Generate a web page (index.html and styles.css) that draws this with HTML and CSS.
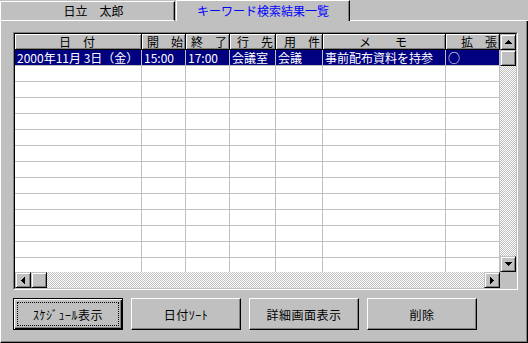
FILE: index.html
```html
<!DOCTYPE html>
<html lang="ja">
<head>
    <meta charset="UTF-8">
    <title>キーワード検索結果一覧</title>
    <link rel="stylesheet" href="styles.css">
</head>
<body>
    <div class="window">
        <!-- タブ -->
        <div class="tabs">
            <div class="tab">日立　太郎</div>
            <div class="tab active">キーワード検索結果一覧</div>
            <div class="tab-rest"></div>
        </div>

        <div class="panel">
            <!-- 検索結果一覧 -->
            <div class="grid">
                <div class="grid-inner">
                    <div class="sheet">
                        <div class="row head">
                            <span class="center">日　付</span>
                            <span>開　始</span>
                            <span>終　了</span>
                            <span>行　先</span>
                            <span>用　件</span>
                            <span class="center">メ　　モ</span>
                            <span>拡　張</span>
                        </div>
                        <div class="row sel">
                            <span>2000年11月 3日（金）</span>
                            <span>15:00</span>
                            <span>17:00</span>
                            <span>会議室</span>
                            <span>会議</span>
                            <span>事前配布資料を持参</span>
                            <span>○</span>
                        </div>
                        <div class="row"><span></span><span></span><span></span><span></span><span></span><span></span><span></span></div>
                        <div class="row"><span></span><span></span><span></span><span></span><span></span><span></span><span></span></div>
                        <div class="row"><span></span><span></span><span></span><span></span><span></span><span></span><span></span></div>
                        <div class="row"><span></span><span></span><span></span><span></span><span></span><span></span><span></span></div>
                        <div class="row"><span></span><span></span><span></span><span></span><span></span><span></span><span></span></div>
                        <div class="row"><span></span><span></span><span></span><span></span><span></span><span></span><span></span></div>
                        <div class="row"><span></span><span></span><span></span><span></span><span></span><span></span><span></span></div>
                        <div class="row"><span></span><span></span><span></span><span></span><span></span><span></span><span></span></div>
                        <div class="row"><span></span><span></span><span></span><span></span><span></span><span></span><span></span></div>
                        <div class="row"><span></span><span></span><span></span><span></span><span></span><span></span><span></span></div>
                        <div class="row"><span></span><span></span><span></span><span></span><span></span><span></span><span></span></div>
                        <div class="row"><span></span><span></span><span></span><span></span><span></span><span></span><span></span></div>
                        <div class="row"><span></span><span></span><span></span><span></span><span></span><span></span><span></span></div>
                    </div>

                    <div class="vscroll">
                        <div class="sbtn">
                            <svg width="7" height="4"><path d="M3 0h1v1h1v1h1v1h1v1H0V3h1V2h1V1h1z"/></svg>
                        </div>
                        <div class="sbtn"></div>
                        <div class="track"></div>
                        <div class="sbtn">
                            <svg width="7" height="4"><path d="M0 0h7v1H6v1H5v1H4v1H3V3H2V2H1V1H0z"/></svg>
                        </div>
                    </div>

                    <div class="hscroll">
                        <div class="sbtn">
                            <svg width="4" height="7"><path d="M3 0h1v7H3V6H2V5H1V4H0V3h1V2h1V1h1z"/></svg>
                        </div>
                        <div class="sbtn"></div>
                        <div class="track"></div>
                        <div class="sbtn">
                            <svg width="4" height="7"><path d="M0 0h1v1h1v1h1v1h1v1H3v1H2v1H1v1H0z"/></svg>
                        </div>
                    </div>

                    <div class="corner"></div>
                </div>
            </div>

            <!-- ボタン -->
            <div class="buttons">
                <button class="btn default"><span>ｽｹｼﾞｭｰﾙ表示</span></button>
                <button class="btn"><span>日付ｿｰﾄ</span></button>
                <button class="btn"><span>詳細画面表示</span></button>
                <button class="btn"><span>削除</span></button>
            </div>
        </div>
    </div>
</body>
</html>
```

FILE: styles.css
```css
* {
    box-sizing: border-box;
}
body {
    margin: 0;
    background: #c0c0c0;
    font-family: "Noto Sans CJK JP", sans-serif;
    font-size: 12px;
    color: #000;
}
.window {
    width: 528px;
    height: 343px;
    display: flex;
    flex-direction: column;
}

/* タブ */
.tabs {
    display: flex;
    height: 21px;
}
.tab {
    width: 175px;
    height: 20px;
    margin-top: 1px;
    padding-left: 12px;
    border-top: 1px solid #fff;
    border-left: 1px solid #fff;
    border-right: 1px solid #000;
    border-bottom: 1px solid #fff;
    box-shadow: inset -1px 0 #808080;
    display: flex;
    align-items: center;
    justify-content: center;
    line-height: 1;
}
.tab.active {
    width: 174px;
    height: 21px;
    margin-top: 0;
    margin-left: 1px;
    padding-left: 0;
    border-bottom: none;
    color: #0000ff;
}
.tab-rest {
    flex: 1;
    border-bottom: 1px solid #fff;
}

.panel {
    flex: 1;
    padding: 11px 9px 0 12px;
    border-left: 1px solid #fff;
    border-right: 1px solid #000;
    border-bottom: 1px solid #000;
    box-shadow: inset -1px -1px #808080;
}

/* 一覧 */
.grid {
    width: 505px;
    height: 258px;
    border: 1px solid;
    border-color: #808080 #fff #fff #808080;
}
.grid-inner {
    height: 100%;
    border: 1px solid;
    border-color: #000 #c0c0c0 #c0c0c0 #000;
    display: grid;
    grid-template-columns: 1fr 16px;
    grid-template-rows: 1fr 16px;
    background: #fff;
}
.sheet {
    overflow: hidden;
}
.row {
    display: grid;
    grid-template-columns: 127px 44px 44px 46px 47px 123px 54px;
    height: 16px;
}
.row span {
    padding-left: 2px;
    border-right: 1px solid #c0c0c0;
    border-bottom: 1px solid #c0c0c0;
    line-height: 15px;
    white-space: nowrap;
    overflow: hidden;
}
.head span {
    padding: 0 2px 0 0;
    background: #c0c0c0;
    border-right-color: #000;
    border-bottom-color: #000;
    box-shadow: inset 1px 1px #fff, inset -1px -1px #808080;
    text-align: right;
}
.head .center {
    text-align: center;
}
.sel span {
    background: #000080;
    color: #fff;
}

/* スクロールバー */
.vscroll, .hscroll {
    display: flex;
}
.vscroll {
    flex-direction: column;
}
.sbtn {
    flex: none;
    width: 16px;
    height: 16px;
    background: #c0c0c0;
    border: 1px solid;
    border-color: #c0c0c0 #000 #000 #c0c0c0;
    box-shadow: inset 1px 1px #fff, inset -1px -1px #808080;
    display: flex;
    align-items: center;
    justify-content: center;
}
.sbtn svg {
    display: block;
    shape-rendering: crispEdges;
}
.track {
    flex: 1;
    background: repeating-conic-gradient(#c0c0c0 0 25%, #fff 0 50%) 0 0 / 2px 2px;
}
.corner {
    background: #c0c0c0;
}

/* ボタン */
.buttons {
    display: flex;
    gap: 8px;
    margin-top: 8px;
}
.btn {
    width: 110px;
    height: 32px;
    padding: 3px;
    background: #c0c0c0;
    border: 1px solid;
    border-color: #fff #000 #000 #fff;
    box-shadow: inset -1px -1px #808080;
    font: inherit;
    letter-spacing: 0.5px;
    color: #000;
}
.btn span {
    height: 100%;
    display: flex;
    align-items: center;
    justify-content: center;
    border: 1px dotted transparent;
}
.btn.default {
    border-color: #000;
    box-shadow: inset 1px 1px #fff, inset -1px -1px #000, inset -2px -2px #808080;
}
.btn.default span {
    border-color: #000;
}
```
